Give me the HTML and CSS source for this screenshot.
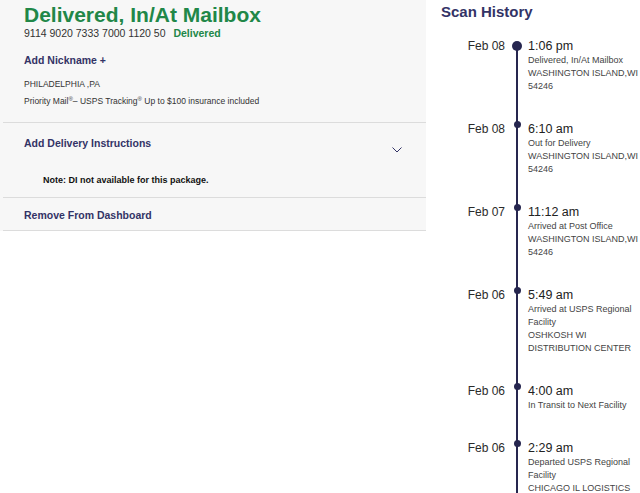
FILE: index.html
```html
<!DOCTYPE html>
<html lang="en">
<head>
<meta charset="utf-8">
<title>Tracking</title>
<link rel="stylesheet" href="styles.css">
</head>
<body>
<div class="page">
  <div class="panel">
    <section class="summary">
      <h1 class="status">Delivered, In/At Mailbox</h1>
      <p class="tracking">9114 9020 7333 7000 1120 50 <span class="tag">Delivered</span></p>
      <p class="nickname">Add Nickname +</p>
      <p class="origin">PHILADELPHIA ,PA</p>
      <p class="service">Priority Mail<sup>®</sup>– USPS Tracking<sup>®</sup> Up to $100 insurance included</p>
    </section>
    <section class="di">
      <div class="di-head">
        <span class="link">Add Delivery Instructions</span>
        <svg class="chev" width="10" height="6" viewBox="0 0 10 6"><polyline points="0.5,0.5 5,5 9.5,0.5" fill="none" stroke="#333366" stroke-width="1"/></svg>
      </div>
      <p class="note">Note: DI not available for this package.</p>
    </section>
    <section class="remove">
      <span class="link">Remove From Dashboard</span>
    </section>
  </div>

  <div class="history">
    <h2 class="h-title">Scan History</h2>
    <div class="events">
      <div class="event first">
        <div class="date">Feb 08</div>
        <div class="mark"><span class="dot big"></span></div>
        <div class="info">
          <div class="time">1:06 pm</div>
          <div class="desc">Delivered, In/At Mailbox</div>
          <div class="desc">WASHINGTON ISLAND,WI 54246</div>
        </div>
      </div>
      <div class="event">
        <div class="date">Feb 08</div>
        <div class="mark"><span class="dot"></span></div>
        <div class="info">
          <div class="time">6:10 am</div>
          <div class="desc">Out for Delivery</div>
          <div class="desc">WASHINGTON ISLAND,WI 54246</div>
        </div>
      </div>
      <div class="event">
        <div class="date">Feb 07</div>
        <div class="mark"><span class="dot"></span></div>
        <div class="info">
          <div class="time">11:12 am</div>
          <div class="desc">Arrived at Post Office</div>
          <div class="desc">WASHINGTON ISLAND,WI 54246</div>
        </div>
      </div>
      <div class="event">
        <div class="date">Feb 06</div>
        <div class="mark"><span class="dot"></span></div>
        <div class="info">
          <div class="time">5:49 am</div>
          <div class="desc">Arrived at USPS Regional Facility</div>
          <div class="desc">OSHKOSH WI DISTRIBUTION CENTER</div>
        </div>
      </div>
      <div class="event">
        <div class="date">Feb 06</div>
        <div class="mark"><span class="dot"></span></div>
        <div class="info">
          <div class="time">4:00 am</div>
          <div class="desc">In Transit to Next Facility</div>
        </div>
      </div>
      <div class="event">
        <div class="date">Feb 06</div>
        <div class="mark"><span class="dot"></span></div>
        <div class="info">
          <div class="time">2:29 am</div>
          <div class="desc">Departed USPS Regional Facility</div>
          <div class="desc">CHICAGO IL LOGISTICS</div>
        </div>
      </div>
    </div>
  </div>
</div>
</body>
</html>
```
FILE: styles.css
```css
* { box-sizing: border-box; }
html, body { margin: 0; padding: 0; background: #fff; }
body {
  font-family: "Liberation Sans", Arial, sans-serif;
  color: #333;
  overflow: hidden;
}
p, h1, h2 { margin: 0; }

.page {
  display: flex;
  align-items: flex-start;
  width: 640px;
}

.panel {
  width: 426px;
  flex: none;
  background: #f7f7f7;
  padding-left: 3px;
}

.summary {
  padding: 3px 0 15px 21px;
  border-bottom: 1px solid #dcdcdc;
}
.status {
  font-size: 21px;
  line-height: 24px;
  font-weight: bold;
  color: #218748;
}
.tracking {
  font-size: 10.5px;
  line-height: 13px;
  color: #333;
}
.tag {
  font-weight: bold;
  color: #218748;
  margin-left: 5px;
}
.nickname {
  margin-top: 14px;
  font-size: 10.5px;
  line-height: 13px;
  font-weight: bold;
  color: #333366;
}
.origin {
  margin-top: 12px;
  font-size: 8.5px;
  line-height: 11px;
  color: #333;
}
.service {
  margin-top: 6px;
  font-size: 8.5px;
  line-height: 11px;
  color: #333;
}
.service sup {
  font-size: 6px;
  line-height: 0;
  vertical-align: 3px;
}

.link {
  font-size: 10.5px;
  line-height: 13px;
  font-weight: bold;
  color: #333366;
}

.di {
  padding: 14px 24px 11px 21px;
  border-bottom: 1px solid #dcdcdc;
}
.di-head {
  display: flex;
  justify-content: space-between;
  align-items: flex-start;
  line-height: 13px;
}
.chev {
  margin-top: 10px;
  display: block;
}
.note {
  margin-top: 21px;
  padding-left: 19px;
  font-size: 9px;
  line-height: 12px;
  font-weight: bold;
  color: #111;
}

.remove {
  padding: 11px 0 8px 21px;
  border-bottom: 1px solid #dcdcdc;
  font-size: 10.5px;
  line-height: 13px;
}

.history {
  flex: 1;
  padding-left: 15px;
  padding-top: 3px;
}
.h-title {
  font-size: 15px;
  line-height: 18px;
  font-weight: bold;
  color: #333366;
}
.events {
  margin-top: 18px;
}
.event {
  display: grid;
  grid-template-columns: 64px 23px 1fr;
}
.date {
  text-align: right;
  font-size: 12px;
  line-height: 15px;
  color: #2b2b2b;
}
.mark {
  background: linear-gradient(#26264f, #26264f) no-repeat;
  background-position: 11px 0;
  background-size: 2px 100%;
  display: flex;
  justify-content: center;
}
.event.first .mark {
  background-position: 11px 7px;
}
.dot {
  display: block;
  width: 7px;
  height: 7px;
  border-radius: 50%;
  background: #26264f;
  margin-top: -1px;
  margin-left: 1px;
}
.dot.big {
  width: 10px;
  height: 10px;
  margin-top: 2px;
}
.info {
  padding-bottom: 29px;
  width: 112px;
}
.time {
  font-size: 12.5px;
  line-height: 15px;
  color: #222;
}
.desc {
  font-size: 9px;
  line-height: 13px;
  color: #444;
}
```
